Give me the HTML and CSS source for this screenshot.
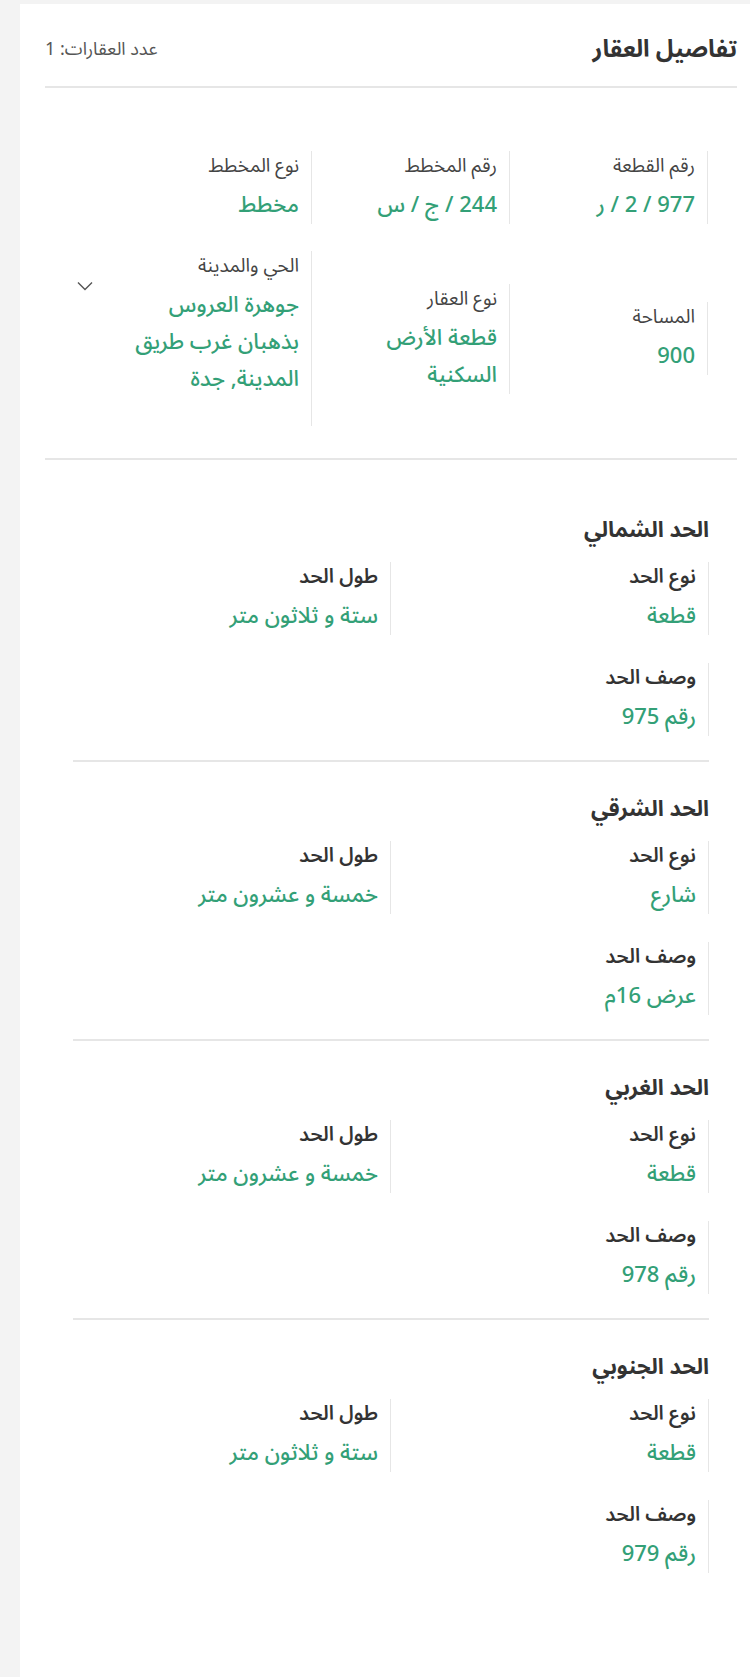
FILE: index.html
```html
<!DOCTYPE html>
<html lang="ar" dir="rtl">
<head>
    <meta charset="UTF-8">
    <meta name="viewport" content="width=device-width, initial-scale=1.0">
    <title>تفاصيل العقار</title>
    <link rel="stylesheet" href="styles.css">
</head>
<body>
    <main class="card">
        <header class="card-head">
            <h1 class="card-title">تفاصيل العقار</h1>
            <span class="count">عدد العقارات: 1</span>
        </header>

        <!-- بيانات القطعة -->
        <section class="info">
            <div class="info-row">
                <div class="field">
                    <div class="field-label">رقم القطعة</div>
                    <div class="field-value">977 / 2 / ر</div>
                </div>
                <div class="field">
                    <div class="field-label">رقم المخطط</div>
                    <div class="field-value">244 / ج / س</div>
                </div>
                <div class="field">
                    <div class="field-label">نوع المخطط</div>
                    <div class="field-value">مخطط</div>
                </div>
            </div>
            <div class="info-row info-row--center">
                <div class="field">
                    <div class="field-label">المساحة</div>
                    <div class="field-value">900</div>
                </div>
                <div class="field">
                    <div class="field-label">نوع العقار</div>
                    <div class="field-value">
                        <div>قطعة الأرض</div>
                        <div>السكنية</div>
                    </div>
                </div>
                <div class="field field--tall">
                    <div class="field-label">الحي والمدينة</div>
                    <div class="field-value">
                        <div>جوهرة العروس</div>
                        <div>بذهبان غرب طريق</div>
                        <div>المدينة, جدة</div>
                    </div>
                </div>
                <button class="toggle" type="button" aria-label="عرض المزيد">
                    <svg width="16" height="10" viewBox="0 0 16 10"><path d="M1 1.5 L8 8.5 L15 1.5" fill="none" stroke="#555" stroke-width="1.4"/></svg>
                </button>
            </div>
        </section>

        <!-- حدود القطعة -->
        <section class="bounds">
            <div class="bound">
                <h2 class="bound-title">الحد الشمالي</h2>
                <div class="bound-grid">
                    <div class="field">
                        <div class="field-label">نوع الحد</div>
                        <div class="field-value">قطعة</div>
                    </div>
                    <div class="field">
                        <div class="field-label">طول الحد</div>
                        <div class="field-value">ستة و ثلاثون متر</div>
                    </div>
                    <div class="field">
                        <div class="field-label">وصف الحد</div>
                        <div class="field-value">رقم 975</div>
                    </div>
                </div>
            </div>
            <div class="bound">
                <h2 class="bound-title">الحد الشرقي</h2>
                <div class="bound-grid">
                    <div class="field">
                        <div class="field-label">نوع الحد</div>
                        <div class="field-value">شارع</div>
                    </div>
                    <div class="field">
                        <div class="field-label">طول الحد</div>
                        <div class="field-value">خمسة و عشرون متر</div>
                    </div>
                    <div class="field">
                        <div class="field-label">وصف الحد</div>
                        <div class="field-value">عرض 16م</div>
                    </div>
                </div>
            </div>
            <div class="bound">
                <h2 class="bound-title">الحد الغربي</h2>
                <div class="bound-grid">
                    <div class="field">
                        <div class="field-label">نوع الحد</div>
                        <div class="field-value">قطعة</div>
                    </div>
                    <div class="field">
                        <div class="field-label">طول الحد</div>
                        <div class="field-value">خمسة و عشرون متر</div>
                    </div>
                    <div class="field">
                        <div class="field-label">وصف الحد</div>
                        <div class="field-value">رقم 978</div>
                    </div>
                </div>
            </div>
            <div class="bound">
                <h2 class="bound-title">الحد الجنوبي</h2>
                <div class="bound-grid">
                    <div class="field">
                        <div class="field-label">نوع الحد</div>
                        <div class="field-value">قطعة</div>
                    </div>
                    <div class="field">
                        <div class="field-label">طول الحد</div>
                        <div class="field-value">ستة و ثلاثون متر</div>
                    </div>
                    <div class="field">
                        <div class="field-label">وصف الحد</div>
                        <div class="field-value">رقم 979</div>
                    </div>
                </div>
            </div>
        </section>
    </main>
</body>
</html>
```

FILE: styles.css
```css
body {
    font-family: "Noto Sans Arabic", "DejaVu Sans", sans-serif;
    background-color: #f3f3f3;
    margin: 0;
    padding: 4px 0 8px 0;
    color: #333;
}

.card {
    background-color: #fff;
    margin-right: 0;
    margin-left: 20px;
    padding: 0 13px 96px 25px;
}

.card-head {
    display: flex;
    justify-content: space-between;
    align-items: center;
    padding: 28px 0 18px 0;
    border-bottom: 2px solid #e6e6e6;
}

.card-title {
    margin: 0;
    font-size: 24px;
    line-height: 36px;
    font-weight: 700;
    color: #333;
}

.count {
    font-size: 18px;
    color: #555;
    margin-top: -2px;
}

/* شبكة بيانات القطعة */
.info {
    padding: 63px 29px 32px 29px;
    border-bottom: 2px solid #e6e6e6;
}

.info-row {
    display: grid;
    grid-template-columns: 198px 198px 198px 1fr;
    align-items: start;
}

.info-row + .info-row {
    margin-top: 27px;
}

.info-row--center {
    align-items: center;
}

.field {
    border-right: 1px solid #e6e6e6;
    padding-right: 12px;
}

.field-label {
    font-size: 19px;
    line-height: 30px;
    color: #444;
    margin-bottom: 6px;
}

.field-value {
    font-size: 22px;
    line-height: 37px;
    font-weight: 500;
    color: #33a077;
}

.field--tall {
    padding-bottom: 28px;
}

.toggle {
    align-self: start;
    justify-self: start;
    margin: 30px 21px 0 0;
    padding: 0;
    border: none;
    background: none;
    cursor: pointer;
    line-height: 0;
}

/* الحدود */
.bounds {
    padding: 23px 28px 0 28px;
}

.bound {
    padding: 32px 0 24px 0;
    border-bottom: 2px solid #e6e6e6;
}

.bound:last-child {
    border-bottom: none;
}

.bound-title {
    margin: 0 0 17px 0;
    font-size: 22px;
    line-height: 30px;
    font-weight: 700;
    color: #333;
}

.bound-grid {
    display: grid;
    grid-template-columns: 1fr 1fr;
    row-gap: 28px;
}

.bound-grid .field-label {
    font-size: 20px;
    font-weight: 600;
    color: #333;
}
```
